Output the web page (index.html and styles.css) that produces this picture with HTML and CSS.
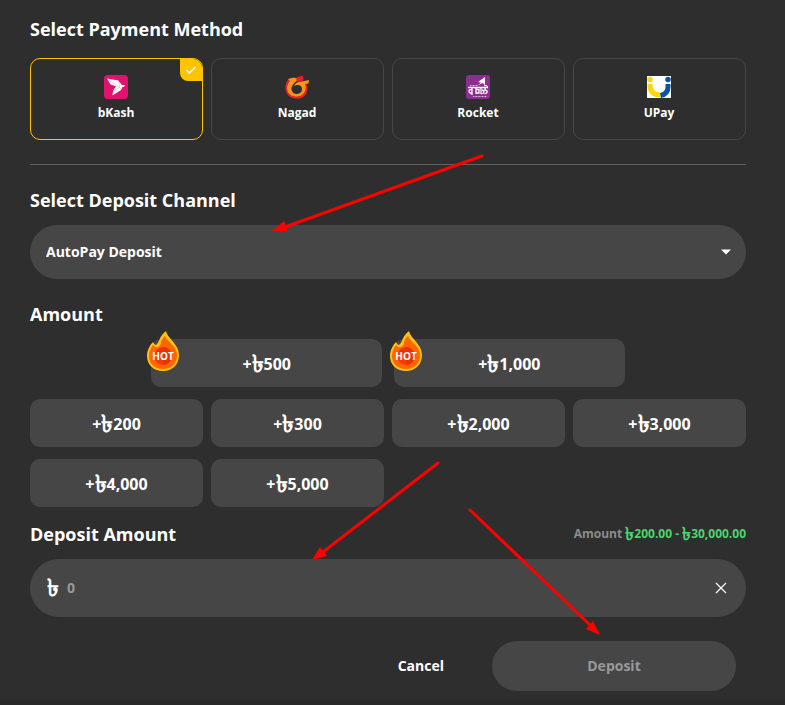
FILE: index.html
```html
<!DOCTYPE html>
<html lang="en">
<head>
    <meta charset="UTF-8">
    <meta name="viewport" content="width=device-width, initial-scale=1.0">
    <title>Deposit</title>
    <link rel="stylesheet" href="styles.css">
</head>
<body>
    <form class="deposit-form">
        <h2 class="method-title">Select Payment Method</h2>
        <div class="methods">
            <button type="button" class="method active" aria-pressed="true">
                <svg width="24" height="24" viewBox="0 0 24 24">
                    <rect width="24" height="24" rx="4" fill="#e2136e"/>
                    <path d="M3 3.500L14.500 5.500L16 12.500L6.500 9.500Z" fill="#fff"/>
                    <path d="M14.500 6L18 10L21 10L20 12L18.500 12L17 15L8.500 20.500L9 16L12 11Z" fill="#fff"/>
                    <path d="M5 5L15 12L17 14M14.500 6L16 12L9 17" fill="none" stroke="#ee9bc0" stroke-width="0.500"/>
                </svg>
                <span>bKash</span>
                <span class="check">
                    <svg width="12" height="10" viewBox="0 0 12 10"><path d="M1.500 5L4.500 8L10.500 2" fill="none" stroke="#fff" stroke-width="1.500"/></svg>
                </span>
            </button>
            <button type="button" class="method" aria-pressed="false">
                <svg width="24" height="24" viewBox="0 0 24 24">
                    <path d="M5 3C-1 8 -1 16 4 21C9 25 17 25 21 19C23 15 23 11 21 8L17 9C20 14 17 20 11 20C5 19 3 12 7 7Z" fill="#ea2127"/>
                    <path d="M6 5C1 9 1 16 5 19.500C10 23 17 22 19.500 17C21 14 21 11 20 9L23.500 8.500L24 5L17 6.500C13 6.500 10 8 9 11C11 9.500 15 9.500 16.500 12C18 15 16 19 12 19C7 19 5 14 7.500 10.500C9 7.500 12 6 13 5L12 3Z" fill="#f7941d"/>
                    <path d="M3 4L9 2.500L12.500 4L7 8Z" fill="#f7941d"/>
                    <path d="M12.500 2L18 0.500L18.500 5.500L13 7L11 5Z" fill="#ed1c24"/>
                </svg>
                <span>Nagad</span>
            </button>
            <button type="button" class="method" aria-pressed="false">
                <svg width="24" height="24" viewBox="0 0 24 24">
                    <rect width="24" height="24" rx="3" fill="#8c2d91"/>
                    <path d="M19 2L12 7L15 7.500L11.500 10.500L16.500 8L19 10Z" fill="#fff"/>
                    <path d="M4 10.500H12M7 21.500H21" stroke="#dbb8dd" stroke-width="1.200" stroke-dasharray="1 0.500"/>
                    <path d="M2 12.500H22M6 13V20M6 14.500C2 14 2 18.500 6 18M10 13V19M10 14.500H13V18H10M15 13V19M15 18.500C19 19 18 15 16 15M19 13V15.500C22 14.500 22 19 18.500 18.500" fill="none" stroke="#fff" stroke-width="1.300"/>
                    <path d="M18 11Q20 9 22 12" fill="none" stroke="#fff"/>
                </svg>
                <span>Rocket</span>
            </button>
            <button type="button" class="method" aria-pressed="false">
                <svg width="24" height="24" viewBox="0 0 24 24">
                    <rect y="1" width="24" height="22" fill="#fff"/>
                    <path d="M3 9V10Q3 20 13.500 20" fill="none" stroke="#ffd60a" stroke-width="5"/>
                    <path d="M21 9V12Q21 19 13.500 20.500" fill="none" stroke="#0756a4" stroke-width="5"/>
                    <circle cx="3" cy="4.500" r="2.750" fill="#ffd60a"/>
                    <circle cx="21" cy="4.500" r="2.750" fill="#0756a4"/>
                </svg>
                <span>UPay</span>
            </button>
        </div>

        <hr>

        <h2><label for="channel">Select Deposit Channel</label></h2>
        <div class="select-wrap">
            <select id="channel">
                <option>AutoPay Deposit</option>
            </select>
            <svg class="caret" width="10" height="6" viewBox="0 0 10 6"><path d="M0 0.500H10L5 5.500Z" fill="#fff"/></svg>
        </div>

        <h2>Amount</h2>
        <div class="hot-amounts">
            <button type="button" class="amount">+<span class="taka">৳</span>500
                <svg class="hot" width="32" height="40" viewBox="0 0 32 40">
                    <path d="M19 0C20 7 32 13 32 24C32 34 25 40 16 40C7 40 0 34 0 25C0 19 3 14 6 11C7 13 8 14 9 14C13 11 12 5 19 0Z" fill="#ffbf13"/>
                    <path d="M18 5C20 11 30 15 30 24C30 33 24 38 16 38C8 38 2 33 2 25C2 20 4 17 6 14C10 19 14 15 14 11C15 8 16 7 18 5Z" fill="#ff6500"/>
                    <circle cx="16" cy="25" r="9" fill="#f43b05"/>
                    <path d="M16 16A9 9 0 0 1 16 34L16 25L9 20Z" fill="#e93200"/>
                    <text x="16" y="29" text-anchor="middle">HOT</text>
                </svg>
            </button>
            <button type="button" class="amount">+<span class="taka">৳</span>1,000
                <svg class="hot" width="32" height="40" viewBox="0 0 32 40">
                    <path d="M19 0C20 7 32 13 32 24C32 34 25 40 16 40C7 40 0 34 0 25C0 19 3 14 6 11C7 13 8 14 9 14C13 11 12 5 19 0Z" fill="#ffbf13"/>
                    <path d="M18 5C20 11 30 15 30 24C30 33 24 38 16 38C8 38 2 33 2 25C2 20 4 17 6 14C10 19 14 15 14 11C15 8 16 7 18 5Z" fill="#ff6500"/>
                    <circle cx="16" cy="25" r="9" fill="#f43b05"/>
                    <path d="M16 16A9 9 0 0 1 16 34L16 25L9 20Z" fill="#e93200"/>
                    <text x="16" y="29" text-anchor="middle">HOT</text>
                </svg>
            </button>
        </div>
        <div class="amounts">
            <button type="button" class="amount">+<span class="taka">৳</span>200</button>
            <button type="button" class="amount">+<span class="taka">৳</span>300</button>
            <button type="button" class="amount">+<span class="taka">৳</span>2,000</button>
            <button type="button" class="amount">+<span class="taka">৳</span>3,000</button>
            <button type="button" class="amount">+<span class="taka">৳</span>4,000</button>
            <button type="button" class="amount">+<span class="taka">৳</span>5,000</button>
        </div>

        <div class="deposit-head">
            <h2><label for="deposit">Deposit Amount</label></h2>
            <p class="range">Amount <span class="limits"><span class="taka">৳</span>200.00 - <span class="taka">৳</span>30,000.00</span></p>
        </div>
        <div class="deposit-box">
            <span class="currency">৳</span>
            <input type="text" id="deposit" placeholder="0">
            <button type="button" class="clear" aria-label="Clear">
                <svg width="12" height="12" viewBox="0 0 12 12"><path d="M1 1L11 11M11 1L1 11" stroke="#fff" stroke-width="1.200"/></svg>
            </button>
        </div>

        <div class="actions">
            <button type="button" class="cancel">Cancel</button>
            <button type="submit" class="submit" disabled>Deposit</button>
        </div>
    </form>
    <div class="bottom-bar"></div>

    <!-- guide arrows -->
    <svg class="arrows" width="785" height="705" viewBox="0 0 785 705">
        <g stroke="#f00" stroke-width="3" stroke-linecap="round">
            <path d="M482 156L285 227"/>
            <path d="M438 463L323 552"/>
            <path d="M470 510L591 626"/>
        </g>
        <g fill="#f00">
            <path d="M272 231L284 221L288 231Z"/>
            <path d="M312 560L320 547L327 556Z"/>
            <path d="M600 635L586 629L593 621Z"/>
        </g>
    </svg>
</body>
</html>
```

FILE: styles.css
```css
* {
    box-sizing: border-box;
}
body {
    margin: 0;
    position: relative;
    background-color: #2e2e2e;
    color: #fff;
    font-family: "Open Sans", "Noto Sans", sans-serif;
    font-weight: 700;
}
button, input, select {
    font: inherit;
    color: inherit;
    border: none;
    background: none;
    padding: 0;
}
button {
    cursor: pointer;
}
.deposit-form {
    padding: 17px 39px 9px 30px;
}
h2 {
    margin: 0 0 13px;
    font-size: 18px;
    line-height: 24px;
}
.method-title {
    margin-bottom: 17px;
}
.methods {
    display: grid;
    grid-template-columns: repeat(4, 1fr);
    gap: 8px;
}
.method {
    position: relative;
    display: flex;
    flex-direction: column;
    align-items: center;
    gap: 4px;
    padding: 16px 1px 16px 0;
    border: 1px solid #444748;
    border-radius: 10px;
    overflow: hidden;
    font-size: 12px;
    line-height: 20px;
}
.method.active {
    border-color: #ffc400;
}
.check {
    position: absolute;
    top: 0;
    right: 0;
    display: flex;
    align-items: center;
    justify-content: center;
    width: 22px;
    height: 22px;
    background-color: #ffc400;
    border-bottom-left-radius: 8px;
}
hr {
    height: 1px;
    margin: 24px 0 23px;
    border: none;
    background-color: #616161;
}
.select-wrap {
    position: relative;
    margin-bottom: 23px;
}
select {
    appearance: none;
    display: block;
    width: 100%;
    height: 54px;
    padding: 0 40px 1px 16px;
    border-radius: 27px;
    background-color: #464646;
    font-size: 14px;
}
.caret {
    position: absolute;
    top: 24px;
    right: 15px;
    pointer-events: none;
}
.hot-amounts {
    display: grid;
    grid-template-columns: repeat(2, calc(33.33% - 8px));
    justify-content: center;
    gap: 12px;
    margin-bottom: 12px;
}
.amounts {
    display: grid;
    grid-template-columns: repeat(4, 1fr);
    gap: 12px 8px;
    margin-bottom: 15px;
}
.amount {
    position: relative;
    height: 48px;
    border-radius: 10px;
    background-color: #464646;
    font-size: 16px;
    line-height: 24px;
}
.taka {
    font-size: 24px;
    line-height: 1;
    vertical-align: -2px;
}
.hot {
    position: absolute;
    top: -8px;
    left: -4px;
}
.hot text {
    fill: #fff;
    font-size: 10px;
}
.deposit-head {
    display: flex;
    justify-content: space-between;
}
.range {
    margin: 0;
    color: #8c8c8c;
    font-size: 12px;
    line-height: 24px;
}
.limits {
    color: #4cd66d;
}
.limits .taka {
    font-size: 18px;
}
.deposit-box {
    display: flex;
    align-items: center;
    height: 58px;
    padding: 0 18px 0 17px;
    border-radius: 29px;
    background-color: #464646;
}
.currency {
    width: 20px;
    padding-bottom: 2px;
    font-size: 24px;
    line-height: 24px;
}
.deposit-box input {
    flex: 1;
    min-width: 0;
    height: 40px;
    padding-bottom: 2px;
    font-size: 14px;
}
.deposit-box input::placeholder {
    color: #999;
}
.clear {
    display: flex;
    padding: 1px;
}
.actions {
    display: flex;
    justify-content: flex-end;
    gap: 24px;
    padding-right: 10px;
    margin-top: 24px;
    font-size: 14px;
}
.cancel {
    padding: 0 24px 2px;
}
.submit {
    width: 244px;
    height: 50px;
    padding-bottom: 2px;
    border-radius: 25px;
    background-color: #464646;
    color: #999;
}
.bottom-bar {
    height: 5px;
    background-color: #292929;
}
.arrows {
    position: absolute;
    top: 0;
    left: 0;
    pointer-events: none;
}
```
